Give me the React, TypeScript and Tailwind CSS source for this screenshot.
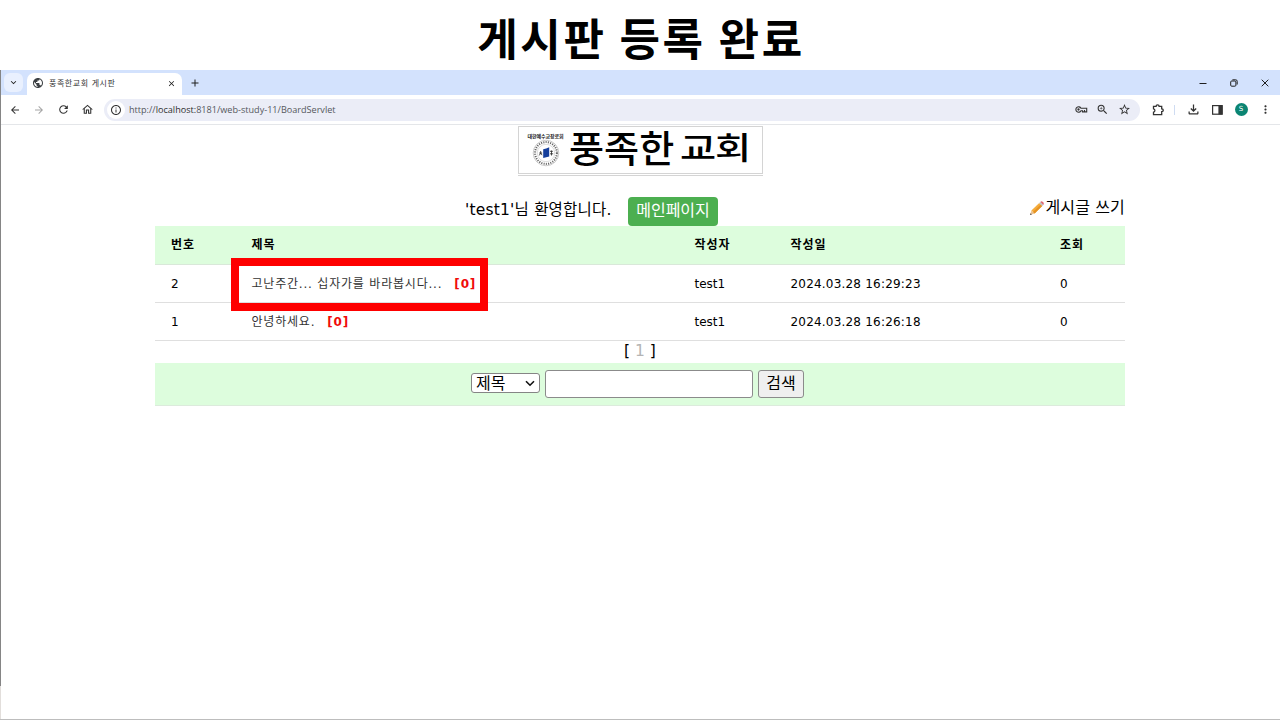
import type { ReactNode } from "react";
import {
  MdAdd,
  MdArrowBack,
  MdArrowForward,
  MdClose,
  MdExpandMore,
  MdInfoOutline,
  MdMoreVert,
  MdOutlineFileDownload,
  MdOutlineHome,
  MdPublic,
  MdRefresh,
  MdStarBorder,
  MdZoomIn,
} from "react-icons/md";

const posts = [
  { no: 2, title: "고난주간... 십자가를 바라봅시다...", author: "test1", date: "2024.03.28 16:29:23", marked: true },
  { no: 1, title: "안녕하세요.", author: "test1", date: "2024.03.28 16:26:18", marked: false },
];

function Slot({ className, children }: { className: string; children: ReactNode }) {
  return <div className={`flex shrink-0 items-center justify-center ${className}`}>{children}</div>;
}

function TabBar() {
  return (
    <div className="flex h-[25px] items-end bg-[#d3e2fd] text-[#1f1f1f]">
      <div className="flex h-full w-[26px] items-center pl-[3px]">
        <Slot className="h-[19px] w-[19px] rounded-[6px] bg-[#e9f0fe]">
          <MdExpandMore size={11} />
        </Slot>
      </div>
      <div className="flex h-[22px] w-[155px] items-center rounded-t-[7px] bg-white pl-[5px] pb-[2px]">
        <MdPublic size={12} className="text-[#3c4043]" />
        <span className="ml-[5px] w-[118px] pt-px text-[8px] leading-none tracking-[0.55px] text-[#333]">풍족한교회 게시판</span>
        <MdClose size={9} />
      </div>
      <Slot className="h-full w-[26px]">
        <MdAdd size={12} />
      </Slot>
      <div className="ml-auto flex h-full items-center">
        <Slot className="w-[31px]">
          <svg width="8" height="8" viewBox="0 0 8 8" stroke="currentColor"><path d="M.5 4.5h7" /></svg>
        </Slot>
        <Slot className="w-[31px]">
          <svg width="8" height="8" viewBox="0 0 8 8" fill="none" stroke="currentColor">
            <rect x=".7" y="2" width="5.2" height="5.2" rx="1" />
            <path d="M2.4 .8h3.3q1.5 0 1.5 1.5v3.2" />
          </svg>
        </Slot>
        <Slot className="w-[31px]">
          <svg width="8" height="8" viewBox="0 0 8 8" stroke="currentColor"><path d="M.7.7l6.6 6.6M7.3.7L.7 7.3" /></svg>
        </Slot>
      </div>
    </div>
  );
}

function Toolbar() {
  return (
    <div className="flex h-[30px] items-center border-b border-[#e4e6e9] bg-white pl-[2px] text-[#333]">
      <Slot className="w-[24px]"><MdArrowBack size={12} /></Slot>
      <Slot className="w-[24px] text-[#a5a5a5]"><MdArrowForward size={12} /></Slot>
      <Slot className="w-[24px]"><MdRefresh size={13} /></Slot>
      <Slot className="w-[24px]"><MdOutlineHome size={13} /></Slot>
      <div className="ml-[5px] flex h-[22px] w-[1036px] items-center rounded-full bg-[#ebedf7] pl-[3px] pr-[5px]">
        <Slot className="h-[18px] w-[18px] rounded-full bg-white"><MdInfoOutline size={12} /></Slot>
        <span className="ml-[4px] font-['Open_Sans'] text-[9.1px] leading-none text-[#55585d]">
          http://<span className="text-[#303030]">localhost:</span>8181/web-study-11/BoardServlet
        </span>
        <div className="ml-auto flex">
          <Slot className="w-[21px]">
            <svg width="13" height="7" viewBox="0 0 13 7" fill="none" stroke="currentColor" strokeWidth="1.1">
              <path d="M6 2.3A2.7 2.7 0 1 0 6 4.7h1.5v1.2h4.2V2.3z" />
              <circle cx="3.5" cy="3.5" r=".6" fill="currentColor" />
              <path d="M9.5 4v2" />
            </svg>
          </Slot>
          <Slot className="w-[21px]"><MdZoomIn size={13} /></Slot>
          <Slot className="w-[22px]"><MdStarBorder size={13} /></Slot>
        </div>
      </div>
      <Slot className="ml-[6px] w-[24px]">
        <svg width="13" height="12" viewBox="0 0 13 12" fill="none" stroke="currentColor" strokeWidth="1.3">
          <path d="M1.5 2.3h2.6q0-1.4 1.5-1.4t1.5 1.4h2.6v2.6q1.6 0 1.6 1.4t-1.6 1.4v3h-8.2V8.2q1.4-.3 1.4-1.7T1.5 4.8z" />
        </svg>
      </Slot>
      <div className="ml-[4px] h-[10px] w-px bg-[#cfdcf2]" />
      <Slot className="ml-[6px] w-[24px]"><MdOutlineFileDownload size={15} /></Slot>
      <Slot className="w-[24px]">
        <svg width="11" height="10" viewBox="0 0 11 10"><rect x=".6" y=".6" width="9.6" height="8.6" fill="none" stroke="currentColor" strokeWidth="1.2" /><path d="M6.4 .6h4v8.8h-4z" fill="currentColor" /></svg>
      </Slot>
      <Slot className="w-[24px]">
        <span className="flex h-[13px] w-[13px] items-center justify-center rounded-full bg-[#0b8573] text-[7px] leading-none text-white">S</span>
      </Slot>
      <Slot className="w-[24px]"><MdMoreVert size={13} /></Slot>
    </div>
  );
}

function Emblem() {
  return (
    <svg width="28" height="28" viewBox="0 0 28 28" fill="none">
      <circle cx="14" cy="14" r="12.8" stroke="#999" strokeWidth=".5" />
      <circle cx="14" cy="14" r="10.9" stroke="#666" strokeWidth="2" strokeDasharray="1.1 1.2" />
      <circle cx="14" cy="14" r="8.7" stroke="#aaa" strokeWidth=".4" />
      <path d="M11.2 10.2l3-.8v8.8l-3 .8zM14.2 9.4l3-1.2v9.4l-3 .6z" fill="#163f9c" />
      <path d="M7.2 14h3M8.7 12v2l-1.4 2.4M8.7 14l1.4 2.2M18 12.3h2.9M18 14.8h3.2M19.5 11.5v5" stroke="#222" strokeWidth=".8" />
    </svg>
  );
}

function Banner() {
  return (
    <div className="mx-auto h-[51px] w-[245px] border-b border-[#d4d4d4] pt-px">
      <div className="flex h-[48px] border border-[#d4d4d4] bg-white">
        <div className="flex w-[49px] flex-col items-center pl-[5px] pt-[7px]">
          <span className="whitespace-nowrap text-[5px] font-bold leading-[5px] tracking-[-0.1px] text-[#222]">대한예수교장로회</span>
          <Emblem />
        </div>
        <div className="flex w-[188px] whitespace-nowrap font-['Noto_Sans_CJK_KR',sans-serif] font-medium text-black">
          <span className="w-[112px] origin-top-left scale-x-[1.03] pl-[1px] text-[37px] leading-[41px]">풍족한</span>
          <span className="origin-top-left scale-x-[1.27] text-[31px] leading-[38px] tracking-[-1px]">교회</span>
        </div>
      </div>
    </div>
  );
}

function Pencil() {
  return (
    <svg width="16" height="16" viewBox="0 0 16 16">
      <path d="M1 15l1.4-4.4 3.2 3z" fill="#e9c294" />
      <path d="M1 15l.6-1.8 1.3 1.2z" fill="#444" />
      <path d="M2.4 10.6L10.2 3l3 3-7.6 7.6z" fill="#f5ac3c" />
      <path d="M4 12.1L11.7 4.5l1.5 1.5-7.6 7.6z" fill="#e59324" />
      <path d="M10.2 3l1.1-1 3 3-1.1 1z" fill="#b9c2c8" />
      <path d="M11.3 2q1.1-1.2 2.3-.2l.8.8q1 1.2-.1 2.4z" fill="#dd6670" />
    </svg>
  );
}

const cols = "grid grid-cols-[80.5px_443px_96px_269.5px_81px] items-center";

function Board() {
  return (
    <div className="mx-auto w-[970px]">
      <div className="flex h-[50px] pt-[21px] text-[16px] leading-[24px] text-black">
        <span className="ml-[310px] w-[163px] whitespace-nowrap pt-px text-[15.5px] tracking-[0.2px]">'test1'님 환영합니다.</span>
        <button className="h-[29px] w-[90px] whitespace-nowrap rounded-[4px] bg-[#4caf50] pb-[2px] text-[16px] leading-[27px] text-white">메인페이지</button>
        <a className="-mt-px ml-auto flex items-center self-start whitespace-nowrap text-[16px] tracking-[0.15px]">
          <Pencil />
          게시글 쓰기
        </a>
      </div>
      <div className="text-[12px] leading-[18px] text-black">
        <div className={`${cols} h-[39px] border-b border-[#d9e8d9] bg-[#ddfddd] pl-[16px] font-bold tracking-[0.9px]`}>
          <span>번호</span>
          <span>제목</span>
          <span>작성자</span>
          <span>작성일</span>
          <span>조회</span>
        </div>
        {posts.map((post) => (
          <div key={post.no} className={`${cols} relative h-[38px] border-b border-[#dfdfdf] pl-[16px]`}>
            <span>{post.no}</span>
            <span className="whitespace-pre tracking-[0.8px] text-[#333]">
              {post.title}
              <b className="ml-[12px] text-[#f00b0b]">[0]</b>
            </span>
            <span>{post.author}</span>
            <span className="tracking-[0.2px]">{post.date}</span>
            <span>0</span>
            {post.marked && <div className="absolute -top-[7px] left-[76px] h-[53px] w-[257px] border-8 border-[#fe0000]" />}
          </div>
        ))}
      </div>
      <div className="flex h-[22px] items-center justify-center text-[15.5px] leading-none text-black">
        <span>[ <span className="text-[#b4b4b4]">1</span> ]</span>
      </div>
      <div className="flex h-[43px] border-b border-[#dcebdc] bg-[#ddfddd] pl-[316px] pt-[7px] text-[16px] leading-none text-black">
        <div className="mt-[3px] flex h-[20px] w-[69px] items-center justify-between rounded-[3px] border border-[#858585] bg-white pl-[4px] pr-[4px]">
          <span className="pt-px">제목</span>
          <svg width="10" height="7" viewBox="0 0 10 7" fill="none" stroke="#111" strokeWidth="1.6"><path d="M1 1.2l4 4 4-4" /></svg>
        </div>
        <input className="ml-[5px] h-[28px] w-[208px] rounded-[3px] border border-[#8b8b8b] bg-white" />
        <button className="ml-[5px] h-[28px] w-[46px] whitespace-nowrap rounded-[3px] border border-[#8b8b8b] bg-[#efefef] pb-px">검색</button>
      </div>
    </div>
  );
}

export default function App() {
  return (
    <div className="flex h-[720px] w-[1280px] flex-col overflow-hidden border-b border-[#bdbdbd] bg-white font-['DejaVu_Sans','Noto_Sans_CJK_KR',sans-serif]">
      <h1 className="h-[70px] shrink-0 pl-[2px] text-center font-['Noto_Sans_CJK_KR',sans-serif] text-[44px] font-bold leading-[74px] tracking-[2.7px] text-black">게시판 등록 완료</h1>
      <div className="h-[616px] shrink-0 border-l border-[#858585]">
        <TabBar />
        <Toolbar />
        <div className="-ml-px flex flex-col">
          <Banner />
          <Board />
        </div>
      </div>
      <div className="flex-1 border-l border-[#e2dedb]" />
    </div>
  );
}
